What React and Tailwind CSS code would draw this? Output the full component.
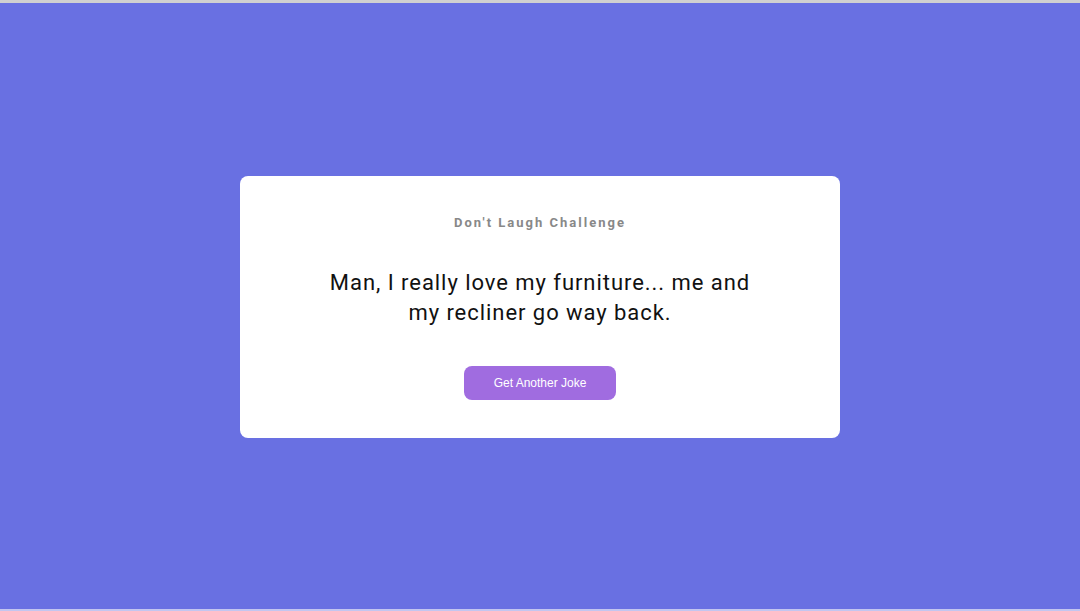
import { useState } from 'react'

const jokes = [
  'Man, I really love my furniture... me and my recliner go way back.',
  'I told my wife she was drawing her eyebrows too high. She looked surprised.',
  'Why don’t skeletons fight each other? They don’t have the guts.',
]

export default function App() {
  const [index, setIndex] = useState(0)

  return (
    <div className="h-[611px] w-full overflow-hidden border-t-[3px] border-b-2 border-t-[#d0d0d0] border-b-[#c3c6f0] bg-[#6970e2] font-['Roboto',sans-serif]">
      <div className="flex h-full items-center justify-center pt-[2px]">
        {/* Card */}
        <div className="flex w-[600px] flex-col items-center rounded-lg bg-white px-10 pt-[39px] pb-[38px] text-center">
          <h3 className="text-[13px] font-bold leading-4 tracking-[2px] text-[#888]">
            Don't Laugh Challenge
          </h3>
          <p className="mt-[37px] max-w-[440px] text-[22px] leading-[30px] tracking-[0.95px] text-[#111]">
            {jokes[index]}
          </p>
          <button
            onClick={() => setIndex((index + 1) % jokes.length)}
            className="mt-[38px] rounded-lg bg-[#a06ce0] px-[30px] py-[10px] font-['Liberation_Sans',Arial,sans-serif] text-[12px] leading-[14px] text-white"
          >
            Get Another Joke
          </button>
        </div>
      </div>
    </div>
  )
}
